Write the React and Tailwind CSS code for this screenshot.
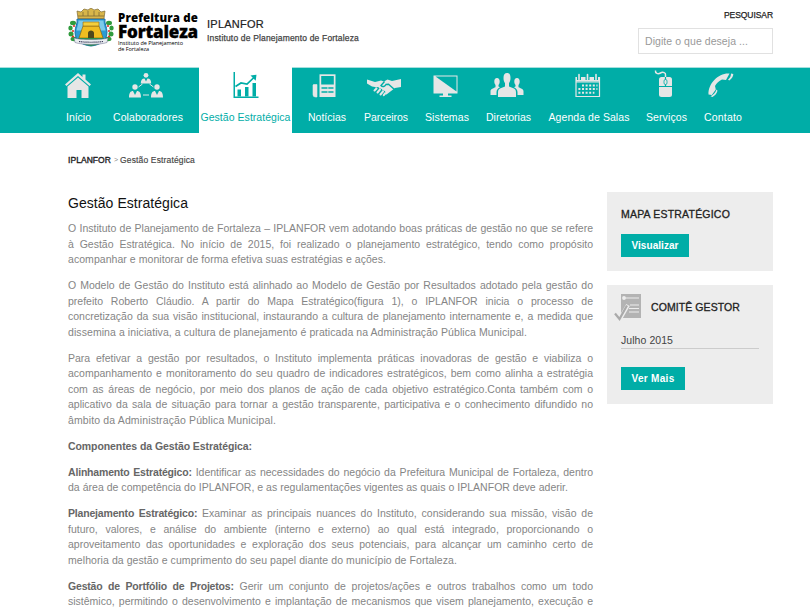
import { useLayoutEffect, useRef } from "react";

// One line of text, tracked so that it spans exactly `width` pixels.
function Fit({ width, className = "", children }) {
  const ref = useRef(null);
  useLayoutEffect(() => {
    const el = ref.current;
    el.style.letterSpacing = "0px";
    const natural = el.getBoundingClientRect().width;
    el.style.letterSpacing = `${(width - natural) / el.textContent.length}px`;
  }, [width]);
  return (
    <span ref={ref} className={`inline-block whitespace-nowrap ${className}`}>
      {children}
    </span>
  );
}

const ICONS = {
  home: (
    <g fill="currentColor">
      <path d="M1 12.500 14 1l4.500 4V2.500h3V7.500L27 12.500l-1.500 1.500L14 4 2.500 14z" />
      <path d="M3.500 14.500 14 5.500l10.500 9V26h-7v-8h-5v8h-9z" />
    </g>
  ),
  team: (
    <g fill="currentColor">
      <circle cx="14" cy="3.300" r="2.400" />
      <path d="M8.800 11.500c0-3.500 1.200-5 3.700-5L14 9.500l1.500-3c2.500 0 3.700 1.500 3.700 5z" />
      <circle cx="3" cy="15" r="2.700" />
      <path d="M-3 25.500c0-4.500 1.500-6.500 4-6.500l2 4 2-4c2.500 0 4 2 4 6.500z" />
      <circle cx="25" cy="15" r="2.700" />
      <path d="M19 25.500c0-4.500 1.500-6.500 4-6.500l2 4 2-4c2.500 0 4 2 4 6.500z" />
      <path d="m6.500 15 4-3M21.500 15l-4-3M11 23h6" stroke="currentColor" strokeWidth="1" />
    </g>
  ),
  chart: (
    <g fill="currentColor">
      <path d="M1.500 0H3v24.500h23.500V26h-25z" />
      <path d="M5.500 17.500h3.500v7H5.500zM13 15h3.500v9.500H13zM20.500 11h3.500v13.500h-3.500z" />
      <path d="m3.500 14.500 5.500-3.500 6 1L23 4.500" fill="none" stroke="currentColor" strokeWidth="1.700" />
      <path d="m18.500 3.500 6-.8-.8 6z" />
    </g>
  ),
  news: (
    <g>
      <path d="M8.500 2.300h16V25h-16z" fill="currentColor" />
      <path d="M2.500 12.500h3.500V25h-1.500a2.500 2.500 0 0 1-2.500-2.500V13z" fill="currentColor" stroke="currentColor" strokeWidth=".6" />
      <path d="M10.200 4h12.600v8.500H10.200z" fill="#00ada7" />
      <path d="M10.500 16h12M10.500 20h12" stroke="#00ada7" strokeWidth="1.400" />
      <path d="M16.500 15h.8v6h-.8z" fill="currentColor" />
    </g>
  ),
  hands: (
    <g>
      <path d="m-3 7.500 8 2.500 6-1.500 3 1 3.500-2 4.500 1.500L31 7v8l-6 1-8.500 6.500-2.500-.5-9-7-3-.5-5-3z" fill="currentColor" />
      <path d="m14.500 9.500-3.500 4c1.500 2 4 1 5-1l2.500-.2 6 5.200" fill="none" stroke="#00ada7" strokeWidth="1.400" />
      <path d="m5.500 19 2-2M8.500 21l2-2.500M11.500 23l2-2.500" stroke="#00ada7" strokeWidth="4" strokeLinecap="round" />
      <path d="m4.500 18.500 2-2M7.500 20.500l2.500-3M10.500 22.500l2.500-3M13.800 23.200l1.500-2" stroke="currentColor" strokeWidth="2" strokeLinecap="round" />
    </g>
  ),
  screen: (
    <g fill="currentColor">
      <path d="M1.500 3.500h24v18h-24z" />
      <path d="M3.500 4.500h21v15z" fill="#00ada7" />
      <path d="M11 21h5v2.500h3.500V25h-12v-1.500H11z" />
    </g>
  ),
  board: (
    <g fill="currentColor">
      <path d="M10.500 6c0-3.500 1.200-5 3.500-5s3.500 1.500 3.500 5c0 2.500-.7 4-1.500 5v3.500l5 2c1.500.7 2 2 2 4V25H5v-4.500c0-2 .5-3.300 2-4l5-2V11c-.8-1-1.500-2.500-1.500-5z" />
      <path d="M4 6c1.800 0 2.700 1.300 2.700 3.500 0 1.500-.5 2.700-1.200 3.500v1.500l1.500.7C4.500 16.500 3.500 18 3.500 20.500V23H-2.500v-3.500c0-2 1-2.500 5-4.300V13c-.7-.8-1.200-2-1.200-3.500C1.300 7.300 2.200 6 4 6zM24 6c-1.800 0-2.700 1.300-2.700 3.500 0 1.500.5 2.700 1.200 3.500v1.500l-1.500.7c2.500 1.300 3.500 2.800 3.500 5.300V23h6v-3.500c0-2-1-2.500-5-4.300V13c.7-.8 1.200-2 1.200-3.500C26.700 7.300 25.800 6 24 6z" />
    </g>
  ),
  calendar: (
    <g>
      <path d="M2 5.500h23.500v19H2zM2 10h23.500" fill="none" stroke="currentColor" strokeWidth="1.200" />
      <path d="M2 6h23.500v3.500H2z" fill="currentColor" />
      <path d="M5 2v6M13.500 2v6M22 2v6" stroke="#00ada7" strokeWidth="4" />
      <path d="M5 2.500v5M13.500 2.500v5M22 2.500v5" stroke="currentColor" strokeWidth="1.600" strokeLinecap="round" />
      <path d="M8 13.500h15.500M4.400 17.100h19M4.400 20.700h16" stroke="currentColor" strokeWidth="2" strokeDasharray="2 1.600" />
    </g>
  ),
  mouse: (
    <g>
      <path d="M3.500-1.500c-.5 3 2.500 4 5 2.500S14 1 13.500 3v3" fill="none" stroke="currentColor" strokeWidth="1.500" />
      <rect x="7" y="5" width="13" height="20" rx="2.500" fill="currentColor" />
      <path d="M7 14.500h13M13.500 5v9" stroke="#00ada7" strokeWidth="1.200" />
      <rect x="12" y="7.500" width="3" height="5" rx="1.500" fill="currentColor" stroke="#00ada7" strokeWidth=".8" />
    </g>
  ),
  phone: (
    <g fill="currentColor">
      <path d="M22.500 1.500C12 .500 1 11 1.500 22.500l3.300.5 4-5.500L8 14c1.500-3 4-5 7-6.500l4 .5z" />
      <path d="m24 1.500 2.300.6c0 2.500-1.500 4.900-4 6.400l-1.300-.8c2-1.700 3-3.700 3-6.200zM9.500 17.500l1 1.300c-.8 2.800-2.500 4.900-5 6.200l-2-.8c3-1.300 5-3.700 6-6.700z" />
    </g>
  ),
};

const NAV = [
  { label: "Início", icon: "home", w: 25, cell: "w-[41px]", shift: "-ml-0.5" },
  { label: "Colaboradores", icon: "team", w: 70, cell: "mr-0.5 w-[98px]", shift: "-ml-1" },
  { label: "Gestão Estratégica", icon: "chart", w: 90, cell: "mr-[7px] w-[93px] bg-white text-[#00ada7]", active: true },
  { label: "Notícias", icon: "news", w: 38, cell: "w-14", shift: "-ml-1" },
  { label: "Parceiros", icon: "hands", w: 44, cell: "w-[62px]", shift: "-ml-1" },
  { label: "Sistemas", icon: "screen", w: 44, cell: "w-[60px]", shift: "-ml-0.5" },
  { label: "Diretorias", icon: "board", w: 45, cell: "w-[63px]", shift: "-ml-1" },
  { label: "Agenda de Salas", icon: "calendar", w: 81, cell: "w-[98px]", shift: "-ml-0.5" },
  { label: "Serviços", icon: "mouse", w: 41, cell: "w-[57px]", shift: "-ml-0.5" },
  { label: "Contato", icon: "phone", w: 38, cell: "w-14", shift: "-ml-1" },
];

// Paragraph lines: plain ones fill the column; [text, width] ones end early.
const PARAGRAPHS = [
  [
    "O Instituto de Planejamento de Fortaleza – IPLANFOR vem adotando boas práticas de gestão no que se refere",
    "à Gestão Estratégica. No início de 2015, foi realizado o planejamento estratégico, tendo como propósito",
    ["acompanhar e monitorar de forma efetiva suas estratégias e ações.", 318],
  ],
  [
    "O Modelo de Gestão do Instituto está alinhado ao Modelo de Gestão por Resultados adotado pela gestão do",
    "prefeito Roberto Cláudio. A partir do Mapa Estratégico(figura 1), o IPLANFOR inicia o processo de",
    "concretização da sua visão institucional, instaurando a cultura de planejamento internamente e, a medida que",
    ["dissemina a iniciativa, a cultura de planejamento é praticada na Administração Pública Municipal.", 459],
  ],
  [
    "Para efetivar a gestão por resultados, o Instituto implementa práticas inovadoras de gestão e viabiliza o",
    "acompanhamento e monitoramento do seu quadro de indicadores estratégicos, bem como alinha a estratégia",
    "com as áreas de negócio, por meio dos planos de ação de cada objetivo estratégico.Conta também com o",
    "aplicativo da sala de situação para tornar a gestão transparente, participativa e o conhecimento difundido no",
    ["âmbito da Administração Pública Municipal.", 208],
  ],
  [[<b>Componentes da Gestão Estratégica:</b>, 184]],
  [
    <><b>Alinhamento Estratégico:</b> Identificar as necessidades do negócio da Prefeitura Municipal de Fortaleza, dentro</>,
    ["da área de competência do IPLANFOR, e as regulamentações vigentes as quais o IPLANFOR deve aderir.", 500],
  ],
  [
    <><b>Planejamento Estratégico:</b> Examinar as principais nuances do Instituto, considerando sua missão, visão de</>,
    "futuro, valores, e análise do ambiente (interno e externo) ao qual está integrado, proporcionando o",
    "aproveitamento das oportunidades e exploração dos seus potenciais, para alcançar um caminho certo de",
    ["melhoria da gestão e cumprimento do seu papel diante do município de Fortaleza.", 389],
  ],
  [
    <><b>Gestão de Portfólio de Projetos:</b> Gerir um conjunto de projetos/ações e outros trabalhos como um todo</>,
    "sistêmico, permitindo o desenvolvimento e implantação de mecanismos que visem planejamento, execução e",
  ],
];

function Crest() {
  return (
    <svg viewBox="0 0 46 42" className="h-[42px] w-[46px] shrink-0">
      <g fill="#2f9b3c">
        <ellipse cx="5" cy="15" rx="3" ry="2.200" />
        <ellipse cx="2.500" cy="20" rx="2.200" ry="2.500" />
        <ellipse cx="3" cy="26" rx="2.500" ry="2.500" />
        <ellipse cx="6" cy="31" rx="3.500" ry="2.200" />
        <ellipse cx="41" cy="15" rx="3" ry="2.200" />
        <ellipse cx="43.500" cy="20" rx="2.200" ry="2.500" />
        <ellipse cx="43" cy="26" rx="2.500" ry="2.500" />
        <ellipse cx="40" cy="31" rx="3.500" ry="2.200" />
      </g>
      <g fill="#e3352b">
        <circle cx="6" cy="18" r="1.100" />
        <circle cx="5" cy="23" r="1.100" />
        <circle cx="5" cy="28.500" r="1.100" />
        <circle cx="40" cy="18" r="1.100" />
        <circle cx="41" cy="23" r="1.100" />
        <circle cx="41" cy="28.500" r="1.100" />
      </g>
      <path d="M9 11h28c-1 4 2 8 2 13 0 9-7 13-16 14C14 37 7 33 7 24c0-5 3-9 2-13z" fill="#2b9bd4" stroke="#1c6fa5" />
      <path d="M10.500 12.500h25c0 4 1.500 7 2 10h-29c.5-3 2-6 2-10z" fill="#7dcbea" />
      <path d="M10 10.500 9 3l4 1 3-3 4 1 3-2 3 2 4-1 3 3 4-1-1 7.500z" fill="#d9b64a" stroke="#7d6a35" strokeWidth=".7" />
      <path d="M10 8h26M15 4v4M20 3v5M26 3v5M31 4v4" stroke="#7d6a35" strokeWidth=".8" />
      <path d="m11 30 4-12h16l4 12z" fill="#f0bd20" stroke="#8a6716" strokeWidth=".7" />
      <path d="M15 14h16v4H15z" fill="#f4cf3c" stroke="#8a6716" strokeWidth=".6" />
      <path d="M20 30v-5c0-3.500 6-3.500 6 0v5z" fill="#4e481c" />
      <path d="M10 30h26c-1 5-6 7-13 8-7-1-12-3-13-8z" fill="#2a8f4d" />
      <path d="M6 30c6 2 28 2 34 0l-1 4.500c-7 2.500-25 2.500-32 0z" fill="#e9edf0" stroke="#668" strokeWidth=".5" />
      <path d="M11 33.500c7 1 17 1 24 0" fill="none" stroke="#335" strokeWidth="1.200" strokeDasharray="1.200 .7" />
    </svg>
  );
}

function Header() {
  return (
    <header className="flex h-[67px] pr-[37px] pl-[68px]">
      <div className="flex w-[139px] pt-2">
        <Crest />
        <div className="flex flex-col items-start pt-1 pl-1 text-black">
          <Fit width={80} className="h-3 font-['Open_Sans'] text-[11.5px] leading-3 font-extrabold">Prefeitura de</Fit>
          <Fit width={80} className="h-4 font-['Open_Sans'] text-[17px] leading-4 font-extrabold [-webkit-text-stroke:0.3px_black]">Fortaleza</Fit>
          <Fit width={65} className="h-[6px] font-['Open_Sans'] text-[5.5px] leading-[6px]">Instituto de Planejamento</Fit>
          <Fit width={31} className="h-[6px] font-['Open_Sans'] text-[5.5px] leading-[6px]">de Fortaleza</Fit>
        </div>
      </div>
      <div className="flex flex-1 flex-col items-start pt-[17px]">
        <Fit width={57} className="text-[11px] leading-[14px] text-[#222] [-webkit-text-stroke:0.2px_#222]">IPLANFOR</Fit>
        <Fit width={152} className="text-[8.5px] leading-[14px] text-[#444] [-webkit-text-stroke:0.25px_#444]">Instituto de Planejamento de Fortaleza</Fit>
      </div>
      <div className="flex w-[135px] flex-col items-end pt-[9px]">
        <Fit width={49} className="h-3 text-[8.5px] leading-3 text-[#222] [-webkit-text-stroke:0.25px_#222]">PESQUISAR</Fit>
        <div className="mt-[7px] flex h-[26px] w-[135px] items-center border border-[#e1e1e1] pt-0.5 pl-1.5">
          <Fit width={103} className="text-[10.5px] text-[#999]">Digite o que deseja ...</Fit>
        </div>
      </div>
    </header>
  );
}

function Nav() {
  return (
    <nav className="flex h-[66px] border-t border-[#a5e0de] bg-[#00ada7] pl-[58px] text-white">
      {NAV.map(({ label, icon, w, cell, shift = "", active }) => (
        <a key={label} className={`flex shrink-0 flex-col items-center ${cell} ${active ? "-mt-px pt-[5px]" : "pt-1"}`}>
          <svg viewBox="0 0 28 28" className={`size-7 overflow-visible ${shift} ${active ? "" : "text-[#e6e6e6]"}`}>
            {ICONS[icon]}
          </svg>
          <Fit width={w} className="mt-2.5 text-[10.5px] leading-[14px]">{label}</Fit>
        </a>
      ))}
    </nav>
  );
}

function Article() {
  return (
    <article className="w-[525px] pt-px">
      <h1 className="h-5 leading-5 text-[#111]">
        <Fit width={120} className="text-[14px]">Gestão Estratégica</Fit>
      </h1>
      <div className="mt-2 space-y-[10.500px] text-[10.5px] leading-[15.500px] text-[#858585] [&_b]:text-[#666] [&>p>span>b]:tracking-[-0.18px]">
        {PARAGRAPHS.map((lines, i) => (
          <p key={i}>
            {lines.map((line, j) =>
              Array.isArray(line) ? (
                <span key={j} className="block h-[15.500px]">
                  <Fit width={line[1]}>{line[0]}</Fit>
                </span>
              ) : (
                <span key={j} className="block h-[15.500px] whitespace-nowrap [text-align-last:justify]">
                  {line}
                </span>
              ),
            )}
          </p>
        ))}
      </div>
    </article>
  );
}

function Sidebar() {
  return (
    <aside className="flex w-[166px] flex-col gap-3.5 text-[#222]">
      <section className="flex h-[79px] flex-col items-start bg-[#ededed] pt-3.5 pl-3.5">
        <Fit width={109} className="text-[10.5px] leading-4 [-webkit-text-stroke:0.3px_#222]">MAPA ESTRATÉGICO</Fit>
        <a className="mt-3 flex h-[23px] w-[68px] items-center justify-center bg-[#00ada7]">
          <Fit width={47} className="text-[10px] font-bold text-white">Visualizar</Fit>
        </a>
      </section>
      <section className="flex h-[119px] flex-col items-start bg-[#ededed] pl-3.5">
        <div className="-ml-[7px] flex h-11 items-center gap-[9px]">
          <svg viewBox="0 0 28 28" className="size-7">
            <path d="M7 1h20v24H7z" fill="#b3b3b3" />
            <circle cx="10" cy="5" r="1.900" fill="#ededed" />
            <path d="M11 5h14M16 12h9M15 15.500h10M15 19h10" stroke="#ededed" strokeWidth="1.200" />
            <path d="m1 21 5 5 8-14" fill="none" stroke="#ededed" strokeWidth="4" />
            <path d="m1 20.500 4.500 5.500L13 12.500" fill="none" stroke="#aaa" strokeWidth="2.200" />
          </svg>
          <Fit width={89} className="text-[10.5px] leading-4 [-webkit-text-stroke:0.3px_#222]">COMITÊ GESTOR</Fit>
        </div>
        <div className="mt-1 h-4 w-[138px] border-b border-[#ccc] leading-[12px]">
          <Fit width={52} className="text-[10.5px] text-[#444]">Julho 2015</Fit>
        </div>
        <a className="mt-[18px] flex h-[23px] w-16 items-center justify-center bg-[#00ada7]">
          <Fit width={43} className="text-[10px] font-bold text-white">Ver Mais</Fit>
        </a>
      </section>
    </aside>
  );
}

export default function App() {
  return (
    <div className="h-[609px] w-[810px] overflow-hidden bg-white font-['Liberation_Sans',Arial,sans-serif]">
      <Header />
      <Nav />
      <div className="flex h-[59px] items-start pt-[21px] pl-[68px] text-[8.5px] leading-3">
        <Fit width={43} className="text-[#222] [-webkit-text-stroke:0.35px_#222]">IPLANFOR</Fit>
        <Fit width={5} className="mr-px ml-[3px] text-[7px] text-[#888]">&gt;</Fit>
        <Fit width={75} className="text-[#444] [-webkit-text-stroke:0.15px_#444]">Gestão Estratégica</Fit>
      </div>
      <main className="flex items-start justify-between pr-[37px] pl-[68px]">
        <Article />
        <Sidebar />
      </main>
    </div>
  );
}
